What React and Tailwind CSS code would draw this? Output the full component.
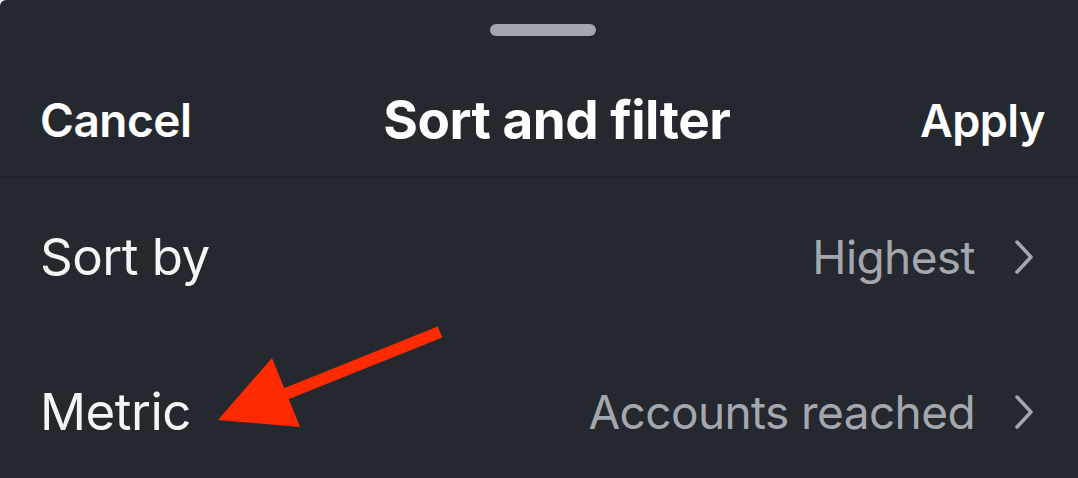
function Row({ label, value, height }) {
  return (
    <div className={`flex items-center justify-between pl-[40px] pr-[43px] ${height}`}>
      <span className="text-[51px] text-[#f4f5f7] tracking-[-0.5px]">{label}</span>
      <div className="flex items-center gap-[38px]">
        <span className="text-[46px] text-[#a3a7ae] tracking-[-0.6px]">{value}</span>
        <svg width="22" height="36" viewBox="0 0 22 36" fill="none">
          <polyline
            points="4,3 18,18 4,33"
            stroke="#a3a7ae"
            strokeWidth="3.5"
            strokeLinecap="round"
            strokeLinejoin="round"
          />
        </svg>
      </div>
    </div>
  );
}

export default function App() {
  return (
    <div
      className="relative w-[1078px] h-[478px] overflow-hidden bg-[#25282f] rounded-tl-[6px]"
      style={{ fontFamily: "Inter, 'Liberation Sans', sans-serif" }}
    >
      {/* grab handle */}
      <div className="flex justify-center pt-6 pl-[8px]">
        <div className="w-[106px] h-3 rounded-full bg-[#a1a6af]" />
      </div>

      {/* header */}
      <div className="mt-6 h-[118px] pt-[5px] flex items-center justify-between pl-[40px] pr-[33px] border-b-2 border-[#202227]">
        <span className="text-[46px] font-semibold text-white tracking-[-0.5px]">Cancel</span>
        <span className="text-[53px] font-bold text-white tracking-[-0.5px] ml-[2px]">Sort and filter</span>
        <span className="text-[45px] font-semibold text-white tracking-[-0.5px]">Apply</span>
      </div>

      <Row label="Sort by" value="Highest" height="h-[158px]" />
      <Row label="Metric" value="Accounts reached" height="h-[152px]" />

      {/* annotation arrow */}
      <svg className="absolute inset-0 pointer-events-none" width="1078" height="478">
        <line x1="440" y1="332" x2="278" y2="397" stroke="#ff2a00" strokeWidth="12" />
        <polygon points="218,420 272,358 300,427" fill="#ff2a00" />
      </svg>
    </div>
  );
}
